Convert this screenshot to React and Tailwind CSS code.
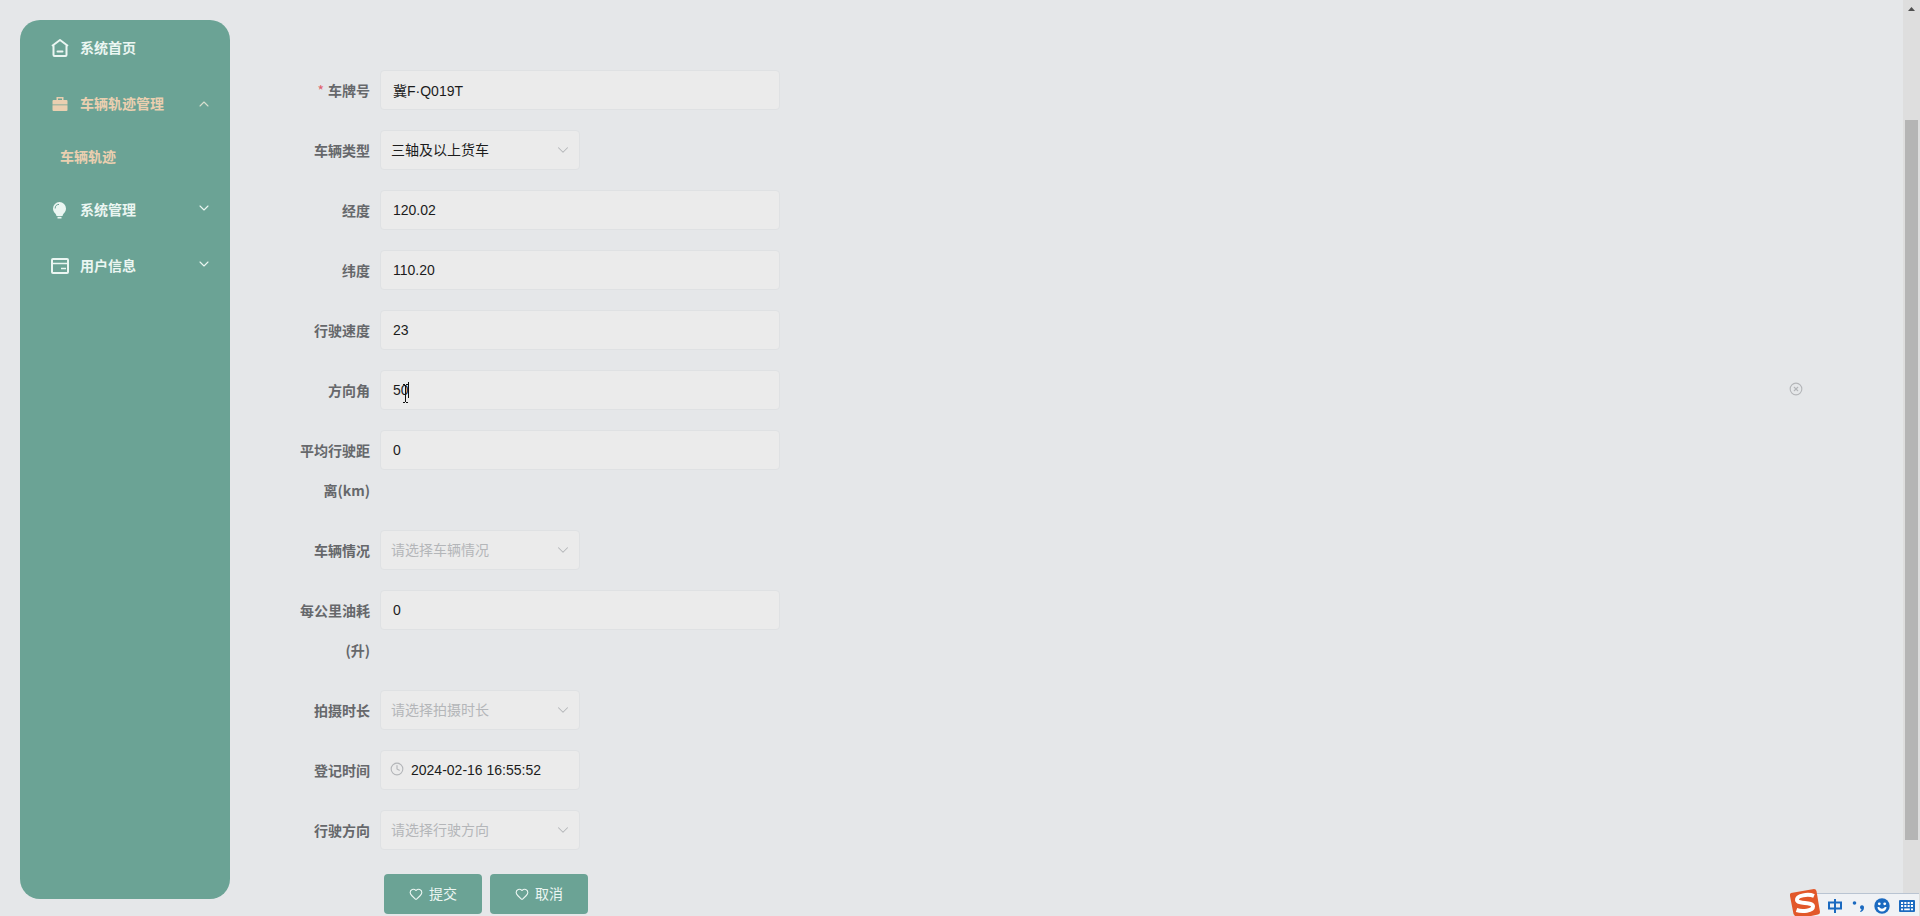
import { ChevronDown, ChevronUp, CircleX, Clock, Heart } from 'lucide-react';

const HomeIcon = () => (
  <svg viewBox="0 0 18 18" className="w-[18px] h-[18px]" fill="none" stroke="currentColor" strokeWidth="2" strokeLinejoin="round">
    <path d="M1 7 9 1l8 6M2.5 6.5V16q0 1 1 1h11q1 0 1-1V6.5" />
    <path d="M6.5 12.5h5" strokeLinecap="round" />
  </svg>
);

const BriefcaseIcon = () => (
  <svg viewBox="0 0 18 18" className="w-[18px] h-[18px]" fill="currentColor">
    <path d="M5.5 5V2h7v3h3q1 0 1 1v3.5h-15V6q0-1 1-1zM7 5h4V3.5H7z" />
    <path d="M1.5 10.3h15V15q0 1-1 1h-13q-1 0-1-1z" />
  </svg>
);

const BulbIcon = () => (
  <svg viewBox="0 0 18 18" className="w-[18px] h-[18px]" fill="currentColor">
    <path d="M8.5 1A6.5 6.5 0 0 0 2 7.5c0 2.5 1.3 4 2.300 5 .7.8 1 1.5 1.2 2.5h6c.2-1 .5-1.7 1.2-2.5 1-1 2.3-2.5 2.3-5A6.5 6.5 0 0 0 8.5 1z" />
    <path d="M6.5 15.8h4v1.700h-4z" />
    <path d="M4.2 7.5A4 4 0 0 1 8 3.400" fill="none" stroke="#6ba395" strokeWidth="1" />
  </svg>
);

const CardIcon = () => (
  <svg viewBox="0 0 18 18" className="w-[18px] h-[18px]" fill="none" stroke="currentColor" strokeWidth="2">
    <rect x="1" y="2" width="16" height="14" rx="1" />
    <path d="M1 6.5h16M10 11.5h5" strokeWidth="1.7" />
  </svg>
);

const menus = [
  { icon: HomeIcon, title: '系统首页' },
  { icon: BriefcaseIcon, title: '车辆轨迹管理', open: true, children: ['车辆轨迹'] },
  { icon: BulbIcon, title: '系统管理', children: [] },
  { icon: CardIcon, title: '用户信息', children: [] }
];

const fields = [
  { id: 'plate', label: '车牌号', value: '冀F·Q019T', required: true },
  { id: 'type', label: '车辆类型', type: 'select', value: '三轴及以上货车' },
  { id: 'lng', label: '经度', value: '120.02' },
  { id: 'lat', label: '纬度', value: '110.20' },
  { id: 'speed', label: '行驶速度', value: '23' },
  { id: 'angle', label: '方向角', value: '50', active: true },
  { id: 'distance', label: '平均行驶距离(km)', value: '0' },
  { id: 'status', label: '车辆情况', type: 'select', placeholder: '请选择车辆情况' },
  { id: 'fuel', label: '每公里油耗(升)', value: '0' },
  { id: 'duration', label: '拍摄时长', type: 'select', placeholder: '请选择拍摄时长' },
  { id: 'time', label: '登记时间', type: 'datetime', value: '2024-02-16 16:55:52' },
  { id: 'direction', label: '行驶方向', type: 'select', placeholder: '请选择行驶方向' }
];

const box = 'h-10 rounded border border-[#dfe1e3] bg-[#ebebeb] text-sm outline-none';

function Sidebar() {
  return (
    <nav className="mt-5 mb-[17px] ml-5 w-[210px] shrink-0 rounded-[20px] bg-[#6ba395] text-sm font-bold text-[#ebf6f2]">
      <ul>
        {menus.map((menu) => (
          <li key={menu.title}>
            <button
              type="button"
              className={`flex h-14 w-full items-center pl-[31px] pr-[18px] ${menu.open ? 'text-[#eacfb0]' : ''}`}
            >
              <menu.icon />
              <span className="ml-[11px]">{menu.title}</span>
              {menu.children && (menu.open
                ? <ChevronUp className="ml-auto h-4 w-4 text-[#d9dfcf]" strokeWidth={1.6} />
                : <ChevronDown className="ml-auto mb-1 h-4 w-4" strokeWidth={1.6} />)}
            </button>
            {menu.open && menu.children.map((child) => (
              <a key={child} href="#track" className="flex h-[50px] items-center pl-10 text-[#eacfb0]">{child}</a>
            ))}
          </li>
        ))}
      </ul>
    </nav>
  );
}

function Control({ field }) {
  if (field.type === 'select') {
    return (
      <div className="relative w-[200px]">
        <select
          id={field.id}
          defaultValue={field.value || ''}
          className={`${box} w-full appearance-none pl-[10px] pr-8 ${field.value ? 'text-[#1c1c1c]' : 'text-[#b4b6b9]'}`}
        >
          <option value={field.value || ''}>{field.value || field.placeholder}</option>
        </select>
        <ChevronDown className="pointer-events-none absolute right-2 top-[11px] h-[18px] w-[18px] text-[#b4b6b9]" strokeWidth={1.4} />
      </div>
    );
  }

  if (field.type === 'datetime') {
    return (
      <div className="relative w-[200px]">
        <Clock className="pointer-events-none absolute left-[10px] top-3 h-[14px] w-[14px] text-[#b4b6b9]" strokeWidth={1.9} />
        <input id={field.id} type="text" defaultValue={field.value} className={`${box} w-full pl-[30px] pr-3 text-[#1c1c1c]`} />
      </div>
    );
  }

  return (
    <div className="relative w-[400px]">
      <input id={field.id} type="text" defaultValue={field.value} className={`${box} w-full px-3 text-[#1c1c1c]`} />
      {field.active && (
        <svg className="pointer-events-none absolute left-[20px] top-[11px] h-[22px] w-[12px]" viewBox="0 0 12 22" fill="none" stroke="#111" shapeRendering="crispEdges">
          <path d="M8.5 1v16" />
          <path d="M3 3.5h2M6 3.5h2M5.5 4v17M3 21.5h2M6 21.5h2" />
        </svg>
      )}
    </div>
  );
}

function Scrollbar() {
  return (
    <div className="flex w-[17px] shrink-0 flex-col items-center bg-[#dedede]" aria-hidden="true">
      <svg viewBox="0 0 17 17" className="h-[17px] w-[17px]" fill="#505050">
        <path d="M5 11h7L8.5 7z" />
      </svg>
      <div className="mt-[103px] h-[720px] w-[13px] bg-[#b5b5b5]" />
    </div>
  );
}

function InputMethodBar() {
  return (
    <div className="fixed bottom-0 right-px flex h-[23px] w-[112px] items-center justify-between border-t border-[#b9c4d2] bg-[#f0f2f5] pl-[21px] pr-1 pt-[2px] text-[#1b6ac0]">
      <svg viewBox="0 0 32 28" className="absolute bottom-0 -left-[18px] h-[28px] w-[32px]">
        <path d="M2 5 25 1q2 0 2.5 2L31 24q0 2-2 2.5L22 28H6L4.5 26 1 8q-.5-2.5 1-3z" fill="#e2582a" />
        <path d="M25 8C19 5.5 7.5 7.5 8 12c.5 4.5 16 1.5 16 6.5 0 4.5-11 5.5-16.5 3.5" fill="none" stroke="#fff" strokeWidth="4" />
      </svg>
      <svg viewBox="0 0 14 14" className="h-[14px] w-[14px]" fill="none" stroke="currentColor" strokeWidth="2">
        <path d="M1 3.5h12v6H1zM7 0v14" />
      </svg>
      <svg viewBox="0 0 14 14" className="h-[14px] w-[14px]" fill="currentColor">
        <circle cx="3.5" cy="4" r="1.8" />
        <path d="M9 8a2 2 0 1 1 4 .5c0 2.500-1.500 4-3.500 4.500l-.5-1c1-.4 1.500-1 1.500-1.800C9.600 10 9 9.300 9 8z" />
      </svg>
      <svg viewBox="0 0 16 16" className="h-[16px] w-[16px]">
        <circle cx="8" cy="8" r="7.7" fill="currentColor" />
        <circle cx="5.3" cy="5.8" r="1.4" fill="#fff" />
        <circle cx="10.7" cy="5.8" r="1.4" fill="#fff" />
        <path d="M3.5 9h1.5q3 3.5 6 0h1.5a4.5 4.5 0 0 1-9 0z" fill="#fff" />
      </svg>
      <svg viewBox="0 0 16 12" className="h-[12px] w-[16px]">
        <rect width="16" height="12" rx="1" fill="currentColor" />
        <path d="M2 3h12M2 6h12" stroke="#fff" strokeWidth="2" strokeDasharray="2.1 1.2" />
        <path d="M2 9.3h2M5.2 9.3h5.6M12 9.3h2" stroke="#fff" strokeWidth="1.8" />
      </svg>
    </div>
  );
}

export default function App() {
  return (
    <div className="flex h-screen overflow-hidden bg-[#e5e7e9] font-['Liberation_Sans','Noto_Sans_CJK_SC',sans-serif]">
      <Sidebar />

      <main className="min-w-0 flex-1 pl-[60px] pr-[100px] pt-[70px]">
        <form onSubmit={(e) => e.preventDefault()}>
          {fields.map((field) => (
            <div key={field.id} className="mb-5 flex items-start gap-[10px]">
              <label
                htmlFor={field.id}
                className="w-20 text-right font-['Noto_Sans_CJK_SC',sans-serif] text-sm leading-10 font-bold text-[#66686b]"
              >
                {field.required && <span className="mr-1 font-normal text-[#e0606c]">*</span>}
                {field.label}
              </label>
              <Control field={field} />
              {field.active && (
                <button type="button" aria-label="清空" className="ml-auto flex h-[38px] items-center text-[#b4b6b9]">
                  <CircleX className="h-[14px] w-[14px]" strokeWidth={1.9} />
                </button>
              )}
            </div>
          ))}

          {/* Form Actions */}
          <div className="ml-[94px] mt-6 flex gap-2">
            {['提交', '取消'].map((text) => (
              <button
                key={text}
                type="submit"
                className="flex h-10 w-[98px] items-center justify-center gap-[6px] rounded bg-[#6ba395] text-sm text-[#ebf6f2]"
              >
                <Heart className="h-[14px] w-[14px]" strokeWidth={1.9} />
                {text}
              </button>
            ))}
          </div>
        </form>
      </main>

      <Scrollbar />
      <InputMethodBar />
    </div>
  );
}
